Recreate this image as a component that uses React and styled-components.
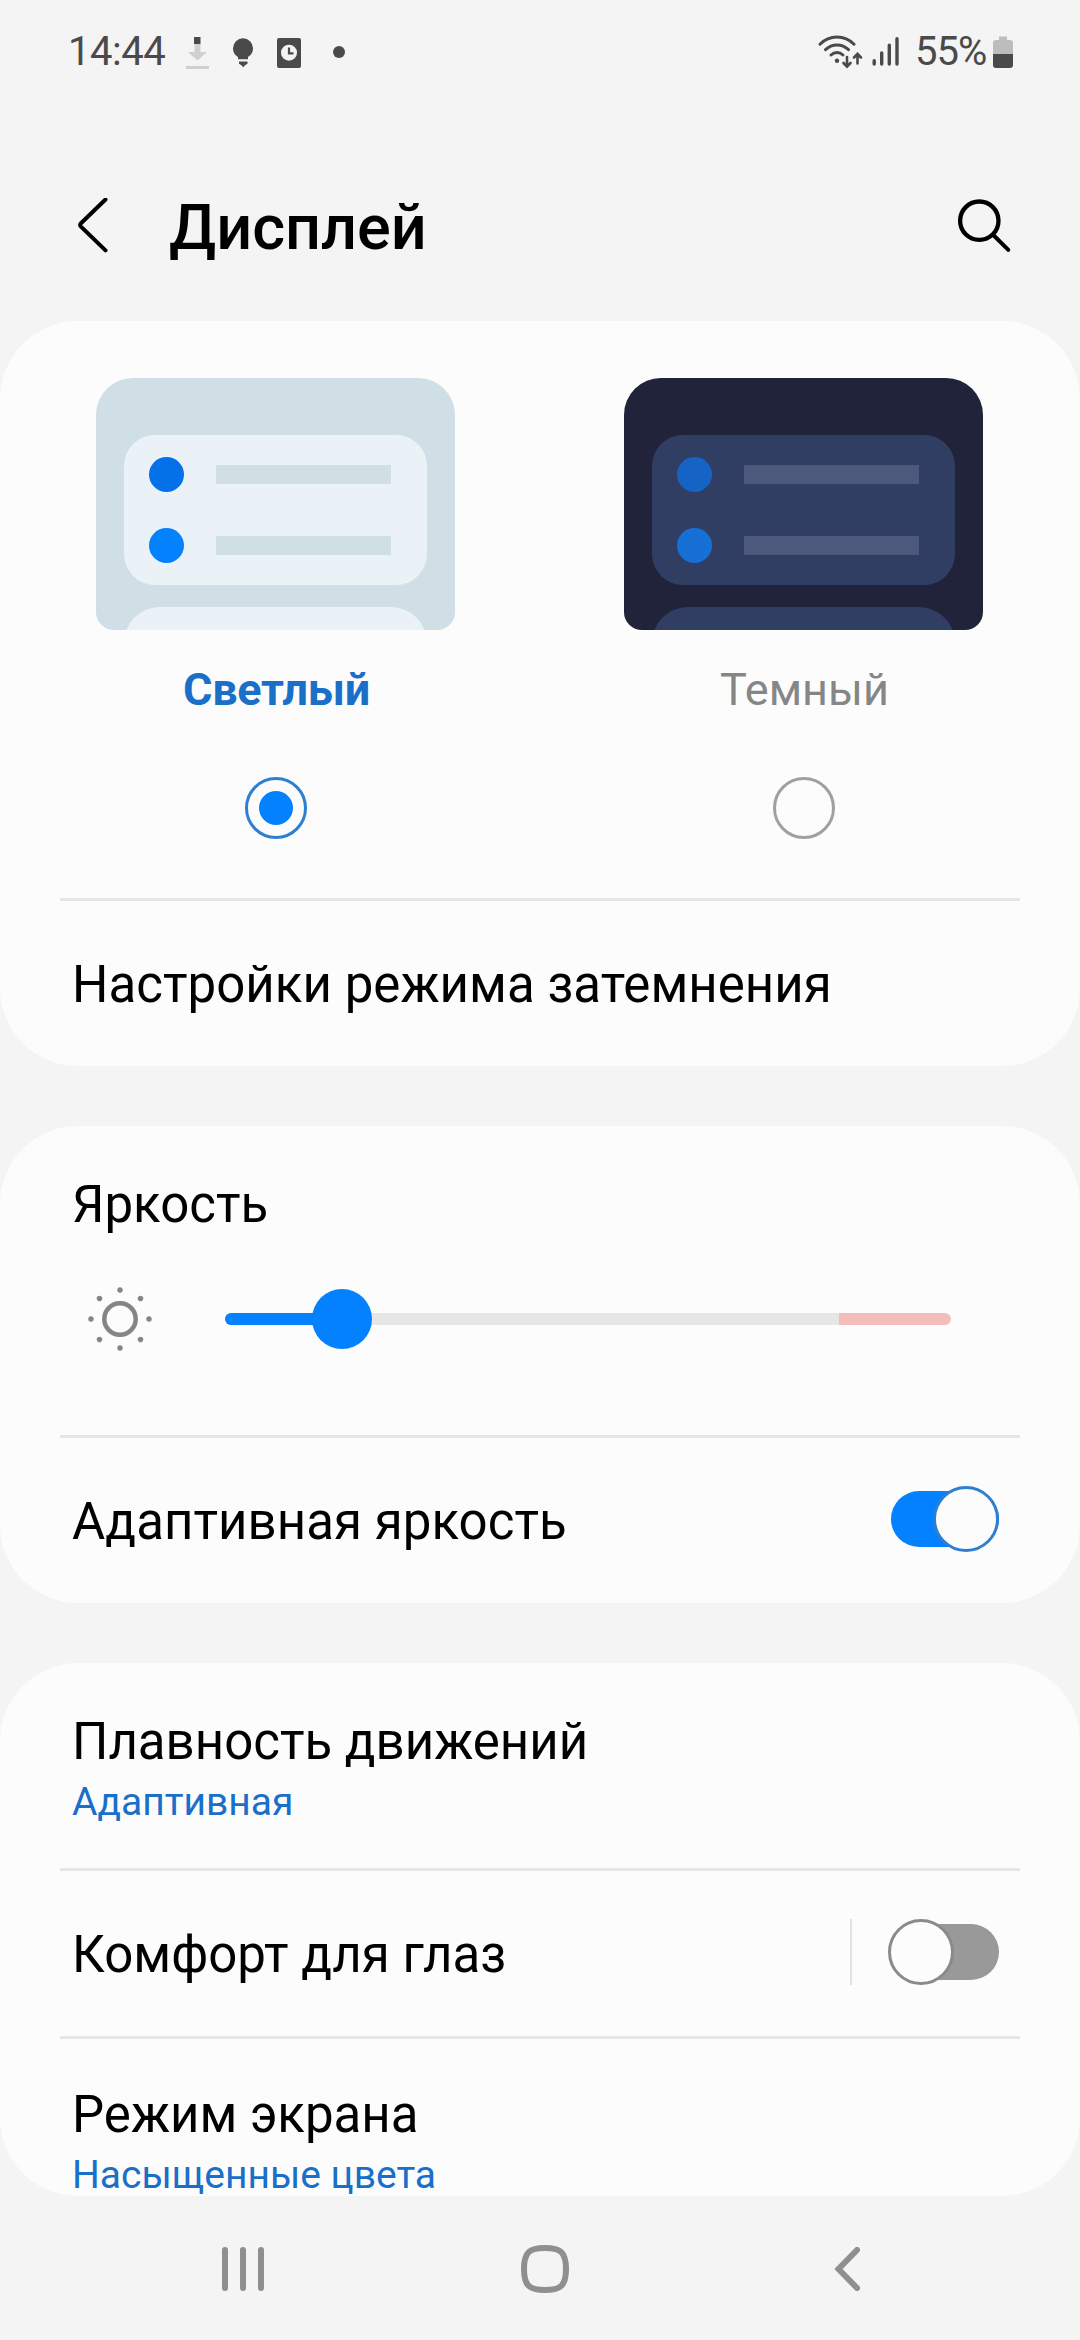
import { useState } from "react";
import styled, { createGlobalStyle, css } from "styled-components";

const GlobalStyle = createGlobalStyle`
	* {
		box-sizing: border-box;
	}
	body {
		margin: 0;
		background: #f4f4f4;
		font-family: Roboto, sans-serif;
	}
	svg {
		display: block;
		flex-shrink: 0;
	}
`;

const Screen = styled.div`
	display: flex;
	flex-direction: column;
	width: 1080px;
	height: 2340px;
	overflow: hidden;
	background: #f4f4f4;
	color: #000;
`;

const StatusBar = styled.div`
	display: flex;
	align-items: center;
	justify-content: space-between;
	height: 104px;
	padding: 0 66px 0 68px;
`;

const StatusGroup = styled.div`
	display: flex;
	align-items: center;
`;

const StatusText = styled.span`
	width: ${(props) => props.$width};
	font-size: 40px;
	line-height: 46px;
	letter-spacing: ${(props) => props.$spacing || "0"};
	white-space: nowrap;
	color: #4a4a4a;
`;

const BatteryText = styled(StatusText)`
	padding-left: 13px;
`;

const Header = styled.header`
	display: flex;
	align-items: center;
	height: 217px;
	padding: 30px 66px 0 74px;
`;

const Title = styled.h1`
	flex: 1;
	margin: 0 0 0 57px;
	font-size: 63px;
	font-weight: 500;
	line-height: 74px;
`;

const IconButton = styled.button`
	display: flex;
	align-items: center;
	justify-content: center;
	padding: 0;
	border: none;
	background: none;
	cursor: pointer;
`;

const Cards = styled.main`
	display: flex;
	flex-direction: column;
	gap: 60px;
`;

const Card = styled.section`
	height: ${(props) => props.$height};
	border-radius: 78px;
	background: #fcfcfc;
	overflow: hidden;
`;

const Divider = styled.div`
	height: 3px;
	margin: 0 60px;
	background: #e6e6e6;
`;

const Themes = styled.div`
	display: flex;
	justify-content: space-between;
	padding: 57px 97px 59px 96px;
`;

const ThemeOption = styled.div`
	display: flex;
	flex-direction: column;
	align-items: center;
	width: 359px;
	cursor: pointer;
`;

const Preview = styled.div`
	width: 359px;
	height: 252px;
	padding: 57px 28px 0;
	border-radius: 37px 37px 18px 18px;
	background: ${(props) => (props.$dark ? "#20233a" : "#cfdfe5")};
	overflow: hidden;
`;

const PreviewCard = styled.div`
	display: flex;
	flex-direction: column;
	justify-content: space-between;
	height: 150px;
	padding: 22px 36px 22px 25px;
	border-radius: 31px;
	background: ${(props) => (props.$dark ? "#313e63" : "#eaf2f8")};

	& + & {
		margin-top: 22px;
		border-radius: 36px;
	}
`;

const PreviewRow = styled.div`
	display: flex;
	align-items: center;
	justify-content: space-between;
`;

const PreviewDot = styled.div`
	width: 35px;
	height: 35px;
	border-radius: 50%;
	background: ${(props) => props.$color};
`;

const PreviewLine = styled.div`
	width: 175px;
	height: 19px;
	background: ${(props) => (props.$dark ? "#4d587d" : "#cfdfe4")};
`;

const ThemeName = styled.div`
	margin-top: 30px;
	padding-left: 2px;
	font-size: 45px;
	line-height: 60px;
	color: #868686;

	${(props) =>
		props.$active &&
		css`
			font-weight: 700;
			letter-spacing: -0.3px;
			color: #1a6fc9;
		`}
`;

const Radio = styled.div`
	display: flex;
	align-items: center;
	justify-content: center;
	width: 62px;
	height: 62px;
	margin-top: 57px;
	border: 3px solid ${(props) => (props.$active ? "#2f7fd0" : "#a0a0a0")};
	border-radius: 50%;

	&::after {
		content: "";
		width: 34px;
		height: 34px;
		border-radius: 50%;
		background: ${(props) => (props.$active ? "#0381fe" : "transparent")};
	}
`;

const Row = styled.div`
	display: flex;
	align-items: center;
	height: 165px;
	padding: 0 81px 0 72px;
`;

const Label = styled.div`
	flex: 1;
	padding-top: 2px;
	font-size: 51px;
	line-height: 60px;
	letter-spacing: 0.05px;
	white-space: nowrap;
`;

const DetailRow = styled.div`
	padding: ${(props) => props.$top} 72px 41px;
`;

const DetailTitle = styled.div`
	font-size: 51px;
	line-height: 60px;
`;

const DetailValue = styled.div`
	margin-top: 5px;
	font-size: 39px;
	line-height: 50px;
	color: #1a6fc9;
`;

const BrightnessBlock = styled.div`
	padding: 49px 129px 86px 72px;
`;

const BrightnessRow = styled.div`
	display: flex;
	align-items: center;
	justify-content: space-between;
	height: 60px;
	margin-top: 54px;
	padding-left: 14px;
`;

const Track = styled.div`
	position: relative;
	width: 726px;
	height: 12px;
	border-radius: 6px;
	background: linear-gradient(to right, #e6e6e6 614px, #f5bcbc 614px);
`;

const TrackFill = styled.div`
	height: 12px;
	border-radius: 6px;
	background: #0381fe;
`;

const Thumb = styled.div`
	position: absolute;
	top: -24px;
	width: 60px;
	height: 60px;
	border-radius: 50%;
	background: #0381fe;
	transform: translateX(-50%);
`;

const ToggleSeparator = styled.div`
	width: 2px;
	height: 66px;
	margin: 0 36px 3px 0;
	background: #e2e2e2;
`;

const ToggleTrack = styled.div`
	display: flex;
	align-items: center;
	justify-content: ${(props) => (props.$on ? "flex-end" : "flex-start")};
	width: 108px;
	height: 56px;
	margin-bottom: 3px;
	margin-left: 3px;
	border-radius: 28px;
	background: ${(props) => (props.$on ? "#0381fe" : "#999")};
	cursor: pointer;
`;

const ToggleKnob = styled.div`
	flex-shrink: 0;
	width: 66px;
	height: 66px;
	margin-left: ${(props) => (props.$on ? "0" : "-3px")};
	border: 3px solid ${(props) => (props.$on ? "#2f7fd0" : "#8a8a8a")};
	border-radius: 50%;
	background: #fcfcfc;
`;

const NavBar = styled.nav`
	display: flex;
	height: 144px;
	padding-left: 92px;
`;

const NavButton = styled(IconButton)`
	width: 302px;
	height: 146px;
`;

const NotificationIcons = () => (
	<svg width="170" height="40" viewBox="180 32 170 40" fill="#4a4a4a">
		<path d="M194 37h6.500v7h-6.500z" />
		<path d="M194.500 44h6v8h6.500l-9.500 8.500-9.500-8.500h6.500zM186 66h23v3h-23z" fill="#d0d0d0" />
		<path d="M243 38.300a10 10 0 0 0-10 10c0 4.500 2.300 7 5 8.700v2.200h10V57c2.700-1.700 5-4.200 5-8.700a10 10 0 0 0-10-10z" />
		<path d="M239 61.500h8.500v2.200l-2.500 1.500-1.800 2-1.800-2-2.400-1.500z" />
		<rect x="277" y="38" width="24" height="30" rx="2" />
		<circle cx="289" cy="52.700" r="8" fill="#f4f4f4" />
		<path d="M289 47.500v5.800h4.500" fill="none" stroke="#4a4a4a" strokeWidth="2.200" />
		<circle cx="339" cy="52" r="6" />
	</svg>
);

const SignalIcons = () => (
	<svg
		width="84"
		height="40"
		viewBox="818 32 84 40"
		fill="none"
		stroke="#4a4a4a"
		strokeWidth="3"
		strokeLinecap="round"
	>
		<path d="M820 44.200c9.500-9.600 24.500-9.600 34 0" />
		<path d="M825.500 49.700c6.500-6.300 16.500-6.300 23 0" />
		<path d="M831 55c3.500-3.200 8.500-3.200 12 0" />
		<circle cx="837" cy="60.700" r="2.200" fill="#4a4a4a" stroke="none" />
		<path d="M847 57v9.500M843.500 63l3.500 3.700 3.500-3.700M857.500 63.500V54M854 57.500l3.500-3.700 3.500 3.700" strokeWidth="2.600" />
		<path d="M874.200 60.800v3.200M881.700 53v11M889.300 45.200V64M897 38.700V64" strokeWidth="3.400" />
	</svg>
);

const BatteryIcon = () => (
	<svg width="21" height="40" viewBox="993 32 21 40">
		<path d="M999 36.500h8v3.500h3a3 3 0 0 1 3 3v11h-20V43a3 3 0 0 1 3-3h3z" fill="#bdbdbd" />
		<path d="M993 54h20v11a3 3 0 0 1-3 3h-14a3 3 0 0 1-3-3z" fill="#4a4a4a" />
	</svg>
);

const BackIcon = () => (
	<svg width="38" height="60" viewBox="74 198 38 60" fill="none" stroke="#000" strokeWidth="4" strokeLinecap="round">
		<path d="M105.500 199.500L81 223.200q-1.600 1.700 0 3.400l24.500 23.800" />
	</svg>
);

const SearchIcon = () => (
	<svg width="60" height="60" viewBox="954 205 60 60" fill="none" stroke="#000" strokeLinecap="round">
		<circle cx="979.300" cy="227.700" r="19.200" strokeWidth="4.300" />
		<path d="M993.300 242l15 14.800" strokeWidth="4" />
	</svg>
);

const SunIcon = () => (
	<svg width="68" height="68" viewBox="-34 -34 68 68" fill="#858585">
		<circle r="15.700" fill="none" stroke="#858585" strokeWidth="4.500" />
		{[0, 45, 90, 135, 180, 225, 270, 315].map((angle) => (
			<circle key={angle} cx="29" r="2.700" transform={`rotate(${angle})`} />
		))}
	</svg>
);

const Toggle = ({ on, onClick }) => (
	<ToggleTrack $on={on} onClick={onClick}>
		<ToggleKnob $on={on} />
	</ToggleTrack>
);

const ThemeCard = ({ name, dark, active, onClick }) => {
	const colors = dark ? ["#1663c6", "#1670d6"] : ["#0471e8", "#0381fe"];

	return (
		<ThemeOption onClick={onClick}>
			<Preview $dark={dark}>
				<PreviewCard $dark={dark}>
					{colors.map((color) => (
						<PreviewRow key={color}>
							<PreviewDot $color={color} />
							<PreviewLine $dark={dark} />
						</PreviewRow>
					))}
				</PreviewCard>
				<PreviewCard $dark={dark} />
			</Preview>
			<ThemeName $active={active}>{name}</ThemeName>
			<Radio $active={active} />
		</ThemeOption>
	);
};

const App = () => {
	const [theme, setTheme] = useState("light");
	const [adaptive, setAdaptive] = useState(true);
	const [comfort, setComfort] = useState(false);
	const brightness = 117;

	return (
		<>
			<GlobalStyle />
			<Screen>
				<StatusBar>
					<StatusGroup>
						<StatusText $width="112px" $spacing="-0.5px">14:44</StatusText>
						<NotificationIcons />
					</StatusGroup>
					<StatusGroup>
						<SignalIcons />
						<BatteryText $width="91px" $spacing="-1px">55%</BatteryText>
						<BatteryIcon />
					</StatusGroup>
				</StatusBar>
				<Header>
					<IconButton>
						<BackIcon />
					</IconButton>
					<Title>Дисплей</Title>
					<IconButton>
						<SearchIcon />
					</IconButton>
				</Header>
				<Cards>
					<Card $height="745px">
						<Themes>
							<ThemeCard name="Светлый" active={theme === "light"} onClick={() => setTheme("light")} />
							<ThemeCard name="Темный" dark active={theme === "dark"} onClick={() => setTheme("dark")} />
						</Themes>
						<Divider />
						<Row>
							<Label>Настройки режима затемнения</Label>
						</Row>
					</Card>
					<Card $height="477px">
						<BrightnessBlock>
							<DetailTitle>Яркость</DetailTitle>
							<BrightnessRow>
								<SunIcon />
								<Track>
									<TrackFill style={{ width: brightness }} />
									<Thumb style={{ left: brightness }} />
								</Track>
							</BrightnessRow>
						</BrightnessBlock>
						<Divider />
						<Row>
							<Label>Адаптивная яркость</Label>
							<Toggle on={adaptive} onClick={() => setAdaptive(!adaptive)} />
						</Row>
					</Card>
					<Card $height="533px">
						<DetailRow $top="49px">
							<DetailTitle>Плавность движений</DetailTitle>
							<DetailValue>Адаптивная</DetailValue>
						</DetailRow>
						<Divider />
						<Row>
							<Label>Комфорт для глаз</Label>
							<ToggleSeparator />
							<Toggle on={comfort} onClick={() => setComfort(!comfort)} />
						</Row>
						<Divider />
						<DetailRow $top="46px">
							<DetailTitle>Режим экрана</DetailTitle>
							<DetailValue>Насыщенные цвета</DetailValue>
						</DetailRow>
					</Card>
				</Cards>
				<NavBar>
					<NavButton>
						<svg width="42" height="44" viewBox="0 0 42 44" stroke="#8f8f8f" strokeWidth="6" strokeLinecap="round">
							<path d="M3 3v38M21 3v38M39 3v38" />
						</svg>
					</NavButton>
					<NavButton>
						<svg width="48" height="48" viewBox="0 0 48 48" fill="none" stroke="#8f8f8f" strokeWidth="6">
							<path d="M24 3c-15.500 0-21 4-21 21s5.500 21 21 21 21-4 21-21S39.500 3 24 3z" />
						</svg>
					</NavButton>
					<NavButton>
						<svg width="26" height="44" viewBox="0 0 26 44" fill="none" stroke="#8f8f8f" strokeWidth="6" strokeLinecap="round">
							<path d="M23 3L4.500 22 23 41" />
						</svg>
					</NavButton>
				</NavBar>
			</Screen>
		</>
	);
};

export default App;
